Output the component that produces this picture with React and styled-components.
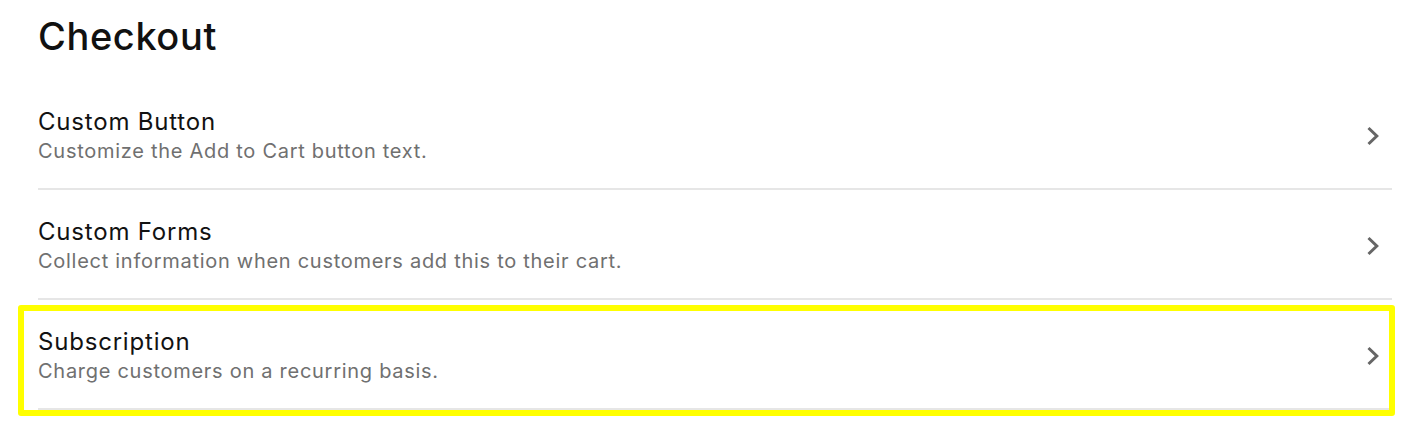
import React from 'react';
import styled, {createGlobalStyle} from "styled-components";

const GlobalStyle = createGlobalStyle`
body {
  margin: 0;
  background: #ffffff;
  font-family: Inter, "Noto Sans", "Liberation Sans", sans-serif;
  -webkit-font-smoothing: antialiased;
}`;

const Page = styled.div`
min-height: 432px;
box-sizing: border-box;
padding: 13px 28px 22px 38px;`;

const Heading = styled.h1`
margin: 0 0 21px 0;
font-size: 38px;
line-height: 46px;
font-weight: 500;
letter-spacing: 0.6px;
color: #111111;`;

const List = styled.ul`
list-style: none;
margin: 0;
padding: 0;`;

const Row = styled.li`
position: relative;
display: flex;
align-items: center;
justify-content: space-between;
padding: 27px 12px 23px 0;
border-bottom: 2px solid #e6e6e6;
cursor: pointer;`;

const Texts = styled.div`
display: flex;
flex-direction: column;`;

const Title = styled.div`
font-size: 24px;
line-height: 30px;
font-weight: 400;
letter-spacing: 0.8px;
color: #121212;`;

const Description = styled.div`
font-size: 20px;
line-height: 28px;
letter-spacing: 0.72px;
color: #707070;`;

const Highlight = styled.div`
position: absolute;
top: 5px;
left: -20px;
right: -3px;
bottom: -8px;
border: 6px solid #ffff00;
border-radius: 3px;
pointer-events: none;`;

const Chevron = () => (
    <svg width="14" height="20" viewBox="0 0 14 20" fill="none">
        <polyline points="2.5,2 10.8,10 2.5,18" stroke="#666666" strokeWidth="3"
                  strokeLinecap="butt" strokeLinejoin="miter"/>
    </svg>
);

const items = [
    {title: "Custom Button", description: "Customize the Add to Cart button text."},
    {title: "Custom Forms", description: "Collect information when customers add this to their cart."},
    {title: "Subscription", description: "Charge customers on a recurring basis.", highlighted: true},
];

const App = () => {
    return (
        <>
            <GlobalStyle/>
            <Page>
                <Heading>Checkout</Heading>
                <List>
                    {items.map(item => (
                        <Row key={item.title}>
                            <Texts>
                                <Title>{item.title}</Title>
                                <Description>{item.description}</Description>
                            </Texts>
                            <Chevron/>
                            {item.highlighted && <Highlight/>}
                        </Row>
                    ))}
                </List>
            </Page>
        </>
    );
};

export default App;
